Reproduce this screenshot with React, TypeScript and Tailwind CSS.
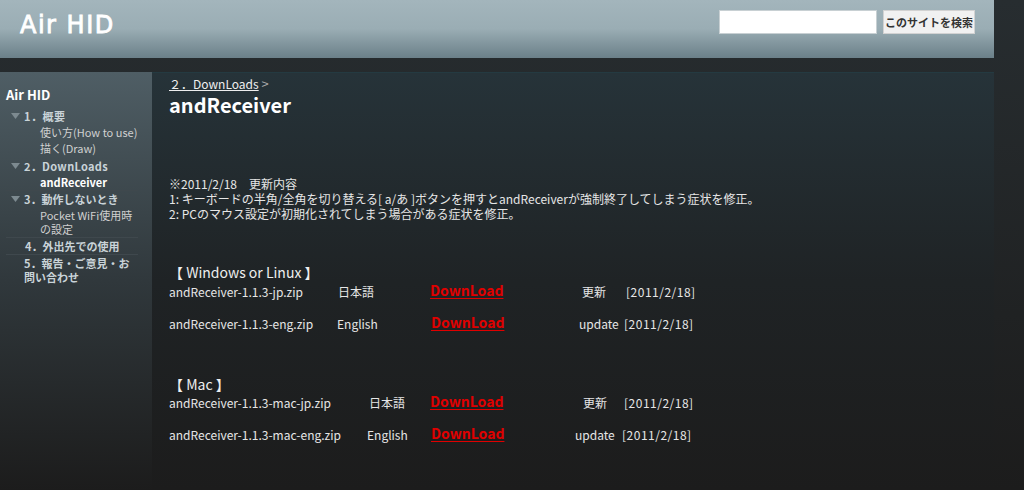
const jp = { fontFamily: '"Noto Sans CJK JP", "Noto Sans", sans-serif' };

function Tri() {
  return (
    <svg width="9" height="6" viewBox="0 0 9 6" className="mr-[4px] shrink-0">
      <path d="M0 0 H9 L4.5 6 Z" fill="#7d8a90" />
    </svg>
  );
}

function Sidebar() {
  return (
    <div className="w-[152px] shrink-0 bg-gradient-to-b from-[#4f5e65] via-[#30383c] to-[#1c1c1c] pt-[15px] pl-[6px] pr-[14px] h-[418px]" style={jp}>
      <div className="text-[13px] leading-[16px] font-bold text-white">Air HID</div>
      <div className="mt-[5px] text-[11px] font-bold text-[#c9d3d8]">
        <div className="flex items-center h-[16px] pl-[5px] tracking-[0.5px]"><Tri />1．概要</div>
        <div className="font-normal text-[#d0d0d0] pl-[34px] leading-[16px]">
          <div>使い方(How to use)</div>
          <div>描く(Draw)</div>
        </div>
        <div className="flex items-center h-[16px] mt-[2px] pl-[5px] tracking-[0.3px]"><Tri />2．DownLoads</div>
        <div className="pl-[34px] leading-[16px] text-white">andReceiver</div>
        <div className="border-t border-[#3f484d]" />
        <div className="flex items-center h-[16px] pl-[5px]"><Tri />3．動作しないとき</div>
        <div className="font-normal text-[#d0d0d0] pl-[34px] leading-[14px] pt-[1px]">Pocket WiFi使用時の設定</div>
        <div className="border-t border-[#3f484d] mt-[1px]" />
        <div className="h-[16px] leading-[16px] pl-[19px]">4．外出先での使用</div>
        <div className="border-t border-[#3f484d]" />
        <div className="pl-[18px] leading-[14px] pt-[1px]">5．報告・ご意見・お問い合わせ</div>
      </div>
    </div>
  );
}

function DL() {
  return (
    <a className="text-[14px] font-bold text-[#e00000] underline underline-offset-2 -mt-[3px]">DownLoad</a>
  );
}

export default function App() {
  return (
    <div className="w-full h-[490px] overflow-hidden bg-gradient-to-b from-[#272d30] to-[#1c1c1c]">
      <div className="w-[994px]">
        <header className="h-[58px] flex items-start justify-between pl-[20px] pr-[19px] bg-gradient-to-b from-[#a3b5bc] via-[#9aadb4] to-[#6b8089]">
          <div className="text-[24px] leading-[28px] mt-[11px] text-white tracking-[1.5px] [-webkit-text-stroke:0.8px_white]" style={{ fontFamily: '"DejaVu Sans", sans-serif' }}>
            Air HID
          </div>
          <div className="flex items-center gap-[6px] mt-[10px]" style={jp}>
            <input className="w-[158px] h-[24px] bg-white border border-[#c8d0d3]" />
            <button className="w-[92px] h-[24px] bg-[#f1f1f1] border border-[#d2d2d2] text-[11px] font-bold text-[#333]">
              このサイトを検索
            </button>
          </div>
        </header>
        <div className="h-[14px]" />
        <div className="flex">
          <Sidebar />
          <main className="flex-1 h-[418px] bg-gradient-to-b from-[#263339] via-[#1f2325] to-[#1c1c1c] border-t border-[#243a41] pl-[17px] text-[#e6e6e6]" style={jp}>
            <div className="text-[12px] leading-[16px] pt-[3px]">
              <span className="underline text-[#eee]">２．DownLoads</span>
              <span className="text-[#aaa] text-[13px]"> &gt;</span>
            </div>
            <h1 className="text-[20px] leading-[24px] font-bold text-white mt-[1px]">andReceiver</h1>

            <div className="mt-[59px] text-[12px] leading-[15px]">
              <div>※2011/2/18　更新内容</div>
              <div>1: キーボードの半角/全角を切り替える[ a/あ ]ボタンを押すとandReceiverが強制終了してしまう症状を修正。</div>
              <div>2: PCのマウス設定が初期化されてしまう場合がある症状を修正。</div>
            </div>

            <div className="mt-[42px] text-[14px] leading-[18px] text-[#eee]">【 Windows or Linux 】</div>
            <div className="mt-[2px] flex items-center h-[18px] text-[12px]">
              <span className="w-[169px]">andReceiver-1.1.3-jp.zip</span>
              <span className="w-[92px]">日本語</span>
              <span className="w-[152px] flex"><DL /></span>
              <span className="w-[44px]">更新</span>
              <span className="tracking-[0.5px]">[2011/2/18]</span>
            </div>
            <div className="mt-[14px] flex items-center h-[18px] text-[12px]">
              <span className="w-[168px]">andReceiver-1.1.3-eng.zip</span>
              <span className="w-[94px]">English</span>
              <span className="w-[148px] flex"><DL /></span>
              <span className="w-[45px]">update</span>
              <span className="tracking-[0.5px]">[2011/2/18]</span>
            </div>

            <div className="mt-[42px] text-[14px] leading-[18px] text-[#eee]">【 Mac 】</div>
            <div className="mt-[1px] flex items-center h-[18px] text-[12px]">
              <span className="w-[200px]">andReceiver-1.1.3-mac-jp.zip</span>
              <span className="w-[61px]">日本語</span>
              <span className="w-[153px] flex"><DL /></span>
              <span className="w-[41px]">更新</span>
              <span className="tracking-[0.5px]">[2011/2/18]</span>
            </div>
            <div className="mt-[14px] flex items-center h-[18px] text-[12px]">
              <span className="w-[198px]">andReceiver-1.1.3-mac-eng.zip</span>
              <span className="w-[64px]">English</span>
              <span className="w-[144px] flex"><DL /></span>
              <span className="w-[47px]">update</span>
              <span className="tracking-[0.5px]">[2011/2/18]</span>
            </div>
          </main>
        </div>
      </div>
    </div>
  );
}
